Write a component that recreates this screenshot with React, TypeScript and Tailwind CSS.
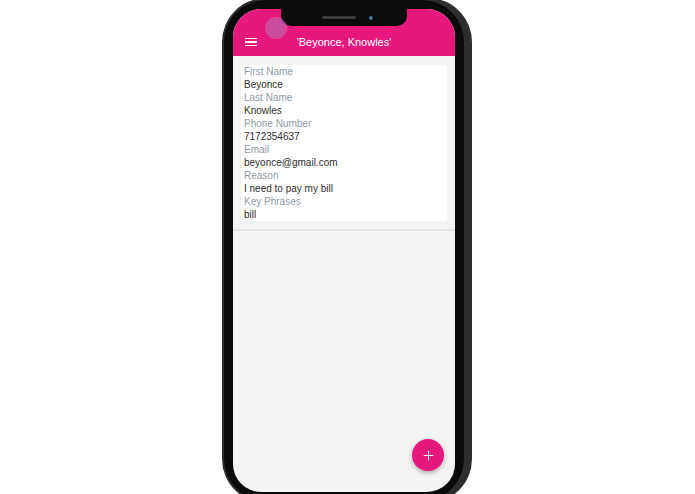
import { Plus } from 'lucide-react'

const fields = [
  { label: 'First Name', value: 'Beyonce' },
  { label: 'Last Name', value: 'Knowles' },
  { label: 'Phone Number', value: '7172354637' },
  { label: 'Email', value: 'beyonce@gmail.com' },
  { label: 'Reason', value: 'I need to pay my bill' },
  { label: 'Key Phrases', value: 'bill' },
]

function Notch() {
  return (
    <div className="absolute left-1/2 top-0 z-10 flex h-[17px] w-[126px] -translate-x-1/2 items-center justify-center gap-[13px] rounded-b-[10px] bg-[#0b0b0b]">
      <span className="ml-[6px] h-[3px] w-[34px] rounded-full bg-[#3b3b3b]" />
      <span className="h-[4px] w-[4px] rounded-full bg-[#3f7a95]" />
    </div>
  )
}

function Hamburger() {
  return (
    <div className="flex w-[12px] flex-col gap-[2px]">
      <span className="h-[1.5px] w-full bg-white" />
      <span className="h-[1.5px] w-full bg-white" />
      <span className="h-[1.5px] w-full bg-white" />
    </div>
  )
}

export default function App() {
  return (
    <div
      className="h-[494px] w-[695px] overflow-hidden bg-white"
      style={{ fontFamily: '"Liberation Sans", Arial, sans-serif' }}
    >
      <div className="ml-[222px] mt-[-2px] w-[250px] rounded-[44px] bg-[#2e2e2e] p-[2px] pr-[8px]">
        <div className="rounded-[42px] bg-[#0b0b0b] p-[9px]">
          <div className="relative flex h-[483px] flex-col overflow-hidden rounded-[28px] bg-[#f4f4f4]">
            <Notch />

            <header className="flex h-[47px] items-end bg-[#e7187d] pb-[4px]">
              <div className="grid h-[20px] w-full grid-cols-[40px_1fr_40px] items-center">
                <div className="pl-[12px]">
                  <Hamburger />
                </div>
                <h1 className="text-center text-[11px] leading-none text-white">
                  'Beyonce, Knowles'
                </h1>
                <div />
              </div>
            </header>

            <div className="absolute left-[33px] top-[9px] z-20 h-[20px] w-[20px] rounded-full bg-[rgba(170,140,205,0.45)] ring-1 ring-[rgba(200,170,220,0.35)]" />

            <main className="flex flex-col">
              <div className="mx-[8px] mt-[9px] rounded-[2px] bg-white px-[3px]">
                {fields.map((f) => (
                  <div key={f.label}>
                    <p className="text-[10px] leading-[13px] text-[#8f9ba6]">{f.label}</p>
                    <p className="text-[10px] leading-[13px] text-[#2f2f2f]">{f.value}</p>
                  </div>
                ))}
              </div>
              <div className="mt-[8px] h-[2px] w-full bg-[#e4e4e4]" />
            </main>

            <button className="absolute bottom-[21px] right-[11px] flex h-[32px] w-[32px] items-center justify-center rounded-full bg-[#e7187d] shadow-[0_2px_5px_rgba(0,0,0,0.3)]">
              <Plus size={15} strokeWidth={1.6} color="white" />
            </button>
          </div>
        </div>
      </div>
    </div>
  )
}
